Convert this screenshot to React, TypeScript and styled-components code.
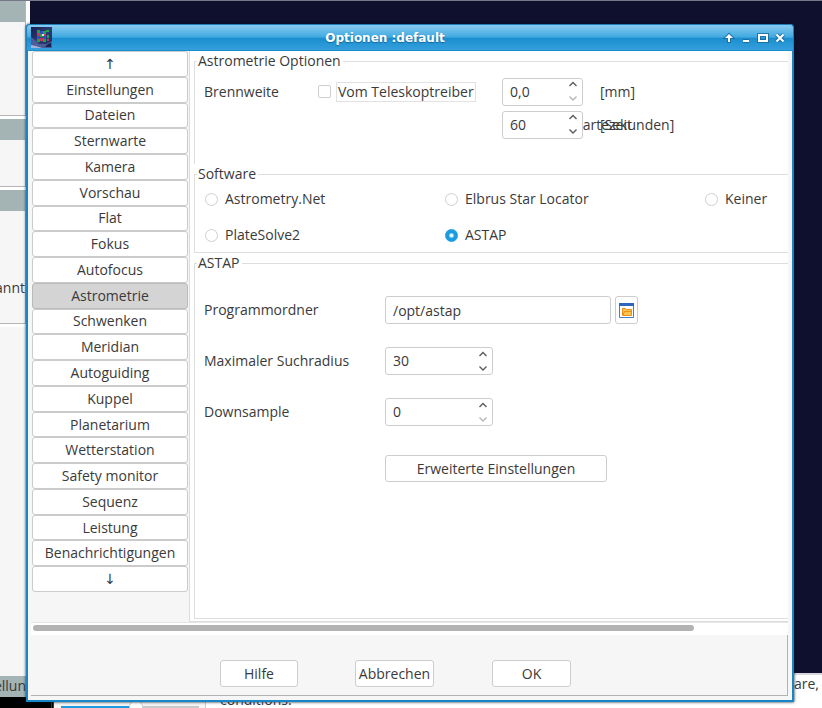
import React, { useState } from "react";
import styled, { createGlobalStyle, css } from "styled-components";

const Global = createGlobalStyle`
  * { box-sizing: border-box; }
  html, body { margin: 0; }
  body, button, input {
    font-family: "Open Sans", "Noto Sans", sans-serif;
    font-size: 14px;
    line-height: 20px;
    color: #3a3a3a;
  }
`;

const Desktop = styled.div`
  position: relative;
  min-height: 100vh;
  overflow: hidden;
  background: #0f0f2e;
  border-top: 1px solid #77778a;
`;

/* Windows behind the dialog */
const Backdrop = styled.div`
  position: absolute;
  inset: 0;
  display: grid;
  grid-template-columns: 30px 1fr;
  grid-template-rows: 1fr 35px;
`;
const SideWindow = styled.div`
  grid-row: 1 / 3;
  display: flex;
  flex-direction: column;
  background: #fff;
  overflow: hidden;
`;
const SidePanel = styled.div<{ $height?: number }>`
  width: 26px;
  flex: ${(p) => (p.$height ? `0 0 ${p.$height}px` : "1")};
  background: #f6f6f6;
  border-right: 1px solid #b5b5b5;
  border-bottom: 1px solid #b5b5b5;
  display: flex;
  flex-direction: column;
  margin-bottom: 3px;
`;
const SideRest = styled.div`
  flex: 1;
  background: #f6f6f6;
`;
const SideHeader = styled.div`
  height: 21px;
  flex: none;
  background: #a4b3b3;
`;
const SideText = styled.div`
  margin-top: 67px;
  display: flex;
  justify-content: flex-end;
  white-space: nowrap;
`;
const SideFoot = styled.div`
  flex: none;
  height: 21px;
  width: 26px;
  background: #a4b3b3;
  display: flex;
  justify-content: flex-end;
  white-space: nowrap;
`;
const SideBlack = styled.div`
  flex: none;
  height: 11px;
  background: #000;
`;
const BottomWindow = styled.div`
  grid-column: 2;
  grid-row: 2;
  display: grid;
  grid-template-columns: 24px 152px 14px 1fr auto;
  background: #fff;
  border-top: 2px solid #d8d8dc;
`;
const BlackCell = styled.div`
  background: #000;
  border-right: 3px double #0a5a0a;
`;
const SliderCell = styled.div`
  background: #f6f6f6;
  border-right: 1px solid #ccc;
  display: flex;
  align-items: flex-end;
  padding: 0 6px 0 7px;
  overflow: hidden;
`;
const BackSlider = styled.input`
  appearance: none;
  width: 100%;
  height: 14px;
  margin: 0 0 -6px;
  background: linear-gradient(#1b9be0 0 0) 0 6px / 76px 3px no-repeat,
    linear-gradient(#c8c8c8 0 0) 0 6px / 100% 3px no-repeat;
  &::-webkit-slider-thumb {
    appearance: none;
    width: 14px;
    height: 14px;
    border: 1px solid #ccc;
    border-radius: 50%;
    background: #fff;
  }
`;
const Conditions = styled.div`
  align-self: end;
  height: 18px;
`;
const Hardware = styled.div`
  padding-right: 3px;
  line-height: 18px;
`;

/* Dialog */
const Dialog = styled.main`
  position: relative;
  margin: 23px 28px 6px 26px;
  border: 2px solid #1a85c4;
  border-top: 0;
  border-radius: 4px 4px 0 0;
  background: #f6f6f6;
  box-shadow: 0 0 3px #05142c;
`;
const TitleBar = styled.header`
  height: 27px;
  margin: 0 -2px;
  padding: 0 7px 0 4px;
  border: 1px solid #1d80b9;
  border-bottom-color: #1b8ccc;
  border-radius: 4px 4px 0 0;
  background: linear-gradient(#8acbf0, #3fa9e0 48%, #1a8ecf 54%, #35a0dc);
  display: grid;
  grid-template-columns: 17px 1fr 64px;
  align-items: center;
`;
const Title = styled.h1`
  margin: 0;
  font: bold 12px/20px "DejaVu Sans", sans-serif;
  text-align: center;
  color: #fff;
  text-shadow: 0 1px 1px #14689c;
`;
const WindowButtons = styled.div`
  display: flex;
  justify-content: flex-end;
  gap: 5px;
`;
const WindowButton = styled.button`
  width: 12px;
  height: 14px;
  padding: 0;
  border: 0;
  background: none;
  display: flex;
  align-items: center;
  justify-content: center;
`;
const Body = styled.div`
  display: grid;
  grid-template-columns: 159px 1fr;
  padding: 0 4px 0 3px;
`;
const Nav = styled.nav`
  padding: 0 1px 30px;
  border-right: 1px solid #dcdcdc;
`;
const NavList = styled.div`
  display: grid;
  grid-template-rows: repeat(21, 1fr);
  height: 541px;
`;
const NavButton = styled.button<{ $active?: boolean; $arrow?: boolean }>`
  width: 100%;
  padding: 0;
  border: 1px solid #cbcbcb;
  border-radius: 3px;
  background: #fff;
  color: inherit;
  line-height: 20px;
  ${(p) =>
    p.$arrow &&
    css`
      font-family: "DejaVu Sans", sans-serif;
    `}
  ${(p) =>
    p.$active &&
    css`
      background: #d4d4d4;
      border-color: #bababa;
    `}
`;
const Page = styled.section`
  background: #fff;
  padding: 0 0 2px 4px;
  border-bottom: 1px solid #dcdcdc;
  min-width: 0;
`;
const Group = styled.fieldset<{ $height: number; $open?: boolean }>`
  margin: 0;
  padding: 0 0 0 9px;
  min-width: 0;
  height: ${(p) => p.$height}px;
  border: 1px solid #dedede;
  border-right: 0;
  border-bottom-width: ${(p) => (p.$open ? 0 : 1)}px;
`;
const Legend = styled.legend`
  margin-left: -7px;
  padding: 0 2px 0 1px;
`;
const FocalGrid = styled.div`
  display: grid;
  grid-template-columns: 120px 178px 81px 1fr;
  grid-template-rows: 27px 27px;
  row-gap: 6px;
  padding-top: 7px;
  align-items: center;
`;
const CheckLabel = styled.label`
  display: flex;
  align-items: center;
  margin-left: -6px;
  gap: 5px;
  span {
    border: 1px solid #e2e2e2;
    line-height: 18px;
    padding: 0 1px;
    white-space: nowrap;
  }
`;
const Check = styled.input`
  appearance: none;
  width: 13px;
  height: 13px;
  margin: 0;
  border: 1px solid #cfcfcf;
  border-radius: 2px;
  background: #fff;
  &:checked { background: #1b9be0; }
`;
const Spin = styled.div<{ $width: number }>`
  display: flex;
  width: ${(p) => p.$width}px;
  height: 28px;
  border: 1px solid #cdcdcd;
  border-radius: 3px;
  background: #fff;
`;
const SpinInput = styled.input`
  flex: 1;
  min-width: 0;
  border: 0;
  padding: 0 0 0 7px;
  background: none;
  outline: 0;
`;
const SpinButtons = styled.div`
  display: flex;
  flex-direction: column;
  width: 18px;
`;
const SpinButton = styled.button<{ $dim?: boolean }>`
  flex: 1;
  padding: 0;
  border: 0;
  background: none;
  color: ${(p) => (p.$dim ? "#b5b5b5" : "#5c5c5c")};
  display: flex;
  align-items: center;
  justify-content: center;
`;
const Unit = styled.span`
  padding-left: 17px;
`;
const OverlapUnit = styled.div`
  display: grid;
  height: 20px;
  > span { grid-area: 1 / 1; white-space: nowrap; }
`;
const ClippedLabel = styled.span`
  display: flex;
  justify-content: flex-end;
  width: 49px;
  overflow: hidden;
`;
const RadioGrid = styled.div`
  display: grid;
  grid-template-columns: 240px 260px 1fr;
  row-gap: 16px;
  padding: 5px 0 0 1px;
`;
const RadioLabel = styled.label`
  display: flex;
  align-items: center;
  gap: 7px;
  white-space: nowrap;
`;
const Radio = styled.input`
  appearance: none;
  width: 13px;
  height: 13px;
  margin: 0;
  border: 1px solid #cfcfcf;
  border-radius: 50%;
  background: #fff;
  &:checked {
    border-color: #1b9be0;
    background: radial-gradient(#fff 0 1px, #1b9be0 3px);
  }
`;
const AstapGrid = styled.div`
  display: grid;
  grid-template-columns: 181px 1fr;
  grid-auto-rows: 28px;
  row-gap: 23px;
  align-items: center;
  padding-top: 23px;
`;
const PathRow = styled.div`
  display: flex;
  gap: 4px;
`;
const PathInput = styled.input`
  width: 226px;
  height: 28px;
  border: 1px solid #cdcdcd;
  border-radius: 3px;
  padding: 0 7px;
`;
const FolderButton = styled.button`
  width: 23px;
  height: 28px;
  padding: 0;
  border: 1px solid #cdcdcd;
  border-radius: 3px;
  background: #fff;
  display: flex;
  align-items: center;
  justify-content: center;
`;
const Button = styled.button<{ $width: number }>`
  width: ${(p) => p.$width}px;
  height: 27px;
  padding: 0;
  border: 1px solid #cdcdcd;
  border-radius: 3px;
  background: #fff;
  color: inherit;
`;
const Advanced = styled.div`
  padding: 29px 0 0 181px;
`;
const ScrollTrack = styled.div`
  margin: 0 4px 0 3px;
  padding: 2px 0 4px 2px;
  background: #fff;
  border-top: 1px solid #e6e6e6;
`;
const ScrollThumb = styled.div`
  width: 661px;
  max-width: 88%;
  height: 6px;
  border-radius: 3px;
  background: #b3b3b3;
`;
const Footer = styled.footer`
  display: grid;
  grid-template-columns: 135px 137px 1fr;
  margin: 0 4px 0 3px;
  padding: 25px 0 8px 189px;
  border-right: 1px solid #b3b3b3;
  border-bottom: 1px solid #b3b3b3;
`;
const FooterGap = styled.div`
  height: 4px;
`;

const AppIcon = () => (
  <svg width="21" height="21" viewBox="0 0 21 21" aria-hidden="true">
    <defs>
      <linearGradient id="sky" x1="0" y1="0" x2="1" y2="1">
        <stop offset="0" stopColor="#17204f" />
        <stop offset=".5" stopColor="#2d3b78" />
        <stop offset="1" stopColor="#1b2b5c" />
      </linearGradient>
    </defs>
    <rect width="21" height="21" fill="url(#sky)" />
    <path d="M0 21V10l4 3 4 4 7 0 6-3v7z" fill="#5a6ba6" opacity=".75" />
    <path d="M0 21v-3l5 1 6 2z" fill="#a5b3d8" />
    <path d="M14 20l3-3 3-1v4z" fill="#132450" />
    <path d="M6 3h3v3H6zM12 4h3v3h-3zM15 3h3v2h-3zM9 7h3v3H9zM6 12h3v3H6zM12 12h3v3h-3zM16 8h2v3h-2z" fill="#23a344" />
    <path d="M6 6h3v3H6zM12 7h3v3h-3zM9 11h3v3H9zM16 12h2v2h-2z" fill="#cf3154" />
    <path d="M9 4h3v3H9zM12 9h3v3h-3zM6 9h3v3H6z" fill="#2d50c8" />
    <path d="M11 7h2v2h-2z" fill="#d7e4f0" />
  </svg>
);

const Glyph = ({ d, fill }: { d: string; fill?: boolean }) => (
  <svg width="12" height="12" viewBox="0 0 12 12" aria-hidden="true" fill={fill ? "#fff" : "none"}>
    <path d={d} stroke="#1b6797" strokeWidth={fill ? 2 : 4} opacity=".8" />
    <path d={d} stroke="#fff" strokeWidth={fill ? 0 : 2} />
  </svg>
);

const Chevron = ({ down }: { down?: boolean }) => (
  <svg width="10" height="8" viewBox="0 0 10 8" fill="none" aria-hidden="true">
    <path d={down ? "M1.500 2.500L5 6l3.500-3.500" : "M1.500 5L5 1.500 8.500 5"} stroke="currentColor" strokeWidth="1.4" />
  </svg>
);

const FolderIcon = () => (
  <svg width="15" height="15" viewBox="0 0 15 15" aria-hidden="true">
    <path d="M.5.5h14v14H.5z" fill="#fff" stroke="#4a7cc4" />
    <path d="M0 0h15v3H0z" fill="#2f66bd" />
    <path d="M3.500 12.500v-7h3l1 1h5v6z" fill="#fbc34a" stroke="#e8901c" />
    <path d="M4 12l1.500-3.500h7" fill="none" stroke="#e8901c" />
  </svg>
);

type SpinBoxProps = { id: string; value: string; width: number; dim?: boolean; label?: string };
const SpinBox = ({ id, value, width, dim, label }: SpinBoxProps) => (
  <Spin $width={width}>
    <SpinInput id={id} defaultValue={value} aria-label={label} />
    <SpinButtons>
      <SpinButton type="button" aria-label="Erhöhen"><Chevron /></SpinButton>
      <SpinButton type="button" aria-label="Verringern" $dim={dim}><Chevron down /></SpinButton>
    </SpinButtons>
  </Spin>
);

const pages = [
  "↑", "Einstellungen", "Dateien", "Sternwarte", "Kamera", "Vorschau", "Flat", "Fokus", "Autofocus",
  "Astrometrie", "Schwenken", "Meridian", "Autoguiding", "Kuppel", "Planetarium", "Wetterstation",
  "Safety monitor", "Sequenz", "Leistung", "Benachrichtigungen", "↓",
];
const solvers = ["Astrometry.Net", "Elbrus Star Locator", "Keiner", "PlateSolve2", "ASTAP"];

export default function App() {
  const [page, setPage] = useState("Astrometrie");
  return (
    <>
      <Global />
      <Desktop>
        <Backdrop>
          <SideWindow>
            <SidePanel $height={115}><SideHeader /></SidePanel>
            <SidePanel $height={68}><SideHeader /></SidePanel>
            <SidePanel $height={134}><SideHeader /><SideText>annt</SideText></SidePanel>
            <SideRest />
            <SideFoot>ellun</SideFoot>
            <SideBlack />
          </SideWindow>
          <BottomWindow>
            <BlackCell />
            <SliderCell><BackSlider type="range" defaultValue={55} aria-label="Position" /></SliderCell>
            <div />
            <Conditions>conditions.</Conditions>
            <Hardware>are,</Hardware>
          </BottomWindow>
        </Backdrop>

        <Dialog>
          <TitleBar>
            <AppIcon />
            <Title>Optionen :default</Title>
            <WindowButtons>
              <WindowButton type="button" aria-label="Einrollen"><Glyph fill d="M6 2l4 4H7v4H5V6H2z" /></WindowButton>
              <WindowButton type="button" aria-label="Minimieren"><Glyph d="M3 9h6" /></WindowButton>
              <WindowButton type="button" aria-label="Maximieren"><Glyph d="M2 3h8v6H2z" /></WindowButton>
              <WindowButton type="button" aria-label="Schließen"><Glyph d="M2.500 2.500l7 7M9.500 2.500l-7 7" /></WindowButton>
            </WindowButtons>
          </TitleBar>
          <Body>
            <Nav>
              <NavList>
                {pages.map((name) => (
                  <NavButton
                    key={name}
                    type="button"
                    $active={name === page}
                    $arrow={name.length === 1}
                    onClick={() => name.length > 1 && setPage(name)}
                  >
                    {name}
                  </NavButton>
                ))}
              </NavList>
            </Nav>
            <Page>
              <Group $height={113} $open>
                <Legend>Astrometrie Optionen</Legend>
                <FocalGrid>
                  <label htmlFor="brennweite">Brennweite</label>
                  <CheckLabel><Check type="checkbox" /><span>Vom Teleskoptreiber</span></CheckLabel>
                  <SpinBox id="brennweite" value="0,0" width={81} dim />
                  <Unit>[mm]</Unit>
                  <div />
                  <div />
                  <SpinBox id="wartezeit" value="60" width={81} label="Wartezeit" />
                  <OverlapUnit>
                    <ClippedLabel>Wartezeit</ClippedLabel>
                    <Unit>[Sekunden]</Unit>
                  </OverlapUnit>
                </FocalGrid>
              </Group>
              <Group $height={89}>
                <Legend>Software</Legend>
                <RadioGrid>
                  {solvers.map((name) => (
                    <RadioLabel key={name}>
                      <Radio type="radio" name="solver" defaultChecked={name === "ASTAP"} />
                      {name}
                    </RadioLabel>
                  ))}
                </RadioGrid>
              </Group>
              <Group $height={366}>
                <Legend>ASTAP</Legend>
                <AstapGrid>
                  <label htmlFor="ordner">Programmordner</label>
                  <PathRow>
                    <PathInput id="ordner" defaultValue="/opt/astap" />
                    <FolderButton type="button" aria-label="Ordner wählen"><FolderIcon /></FolderButton>
                  </PathRow>
                  <label htmlFor="suchradius">Maximaler Suchradius</label>
                  <SpinBox id="suchradius" value="30" width={108} />
                  <label htmlFor="downsample">Downsample</label>
                  <SpinBox id="downsample" value="0" width={108} dim />
                </AstapGrid>
                <Advanced><Button type="button" $width={222}>Erweiterte Einstellungen</Button></Advanced>
              </Group>
            </Page>
          </Body>
          <ScrollTrack><ScrollThumb /></ScrollTrack>
          <Footer>
            <Button type="button" $width={78}>Hilfe</Button>
            <Button type="button" $width={79}>Abbrechen</Button>
            <Button type="button" $width={79}>OK</Button>
          </Footer>
          <FooterGap />
        </Dialog>
      </Desktop>
    </>
  );
}
